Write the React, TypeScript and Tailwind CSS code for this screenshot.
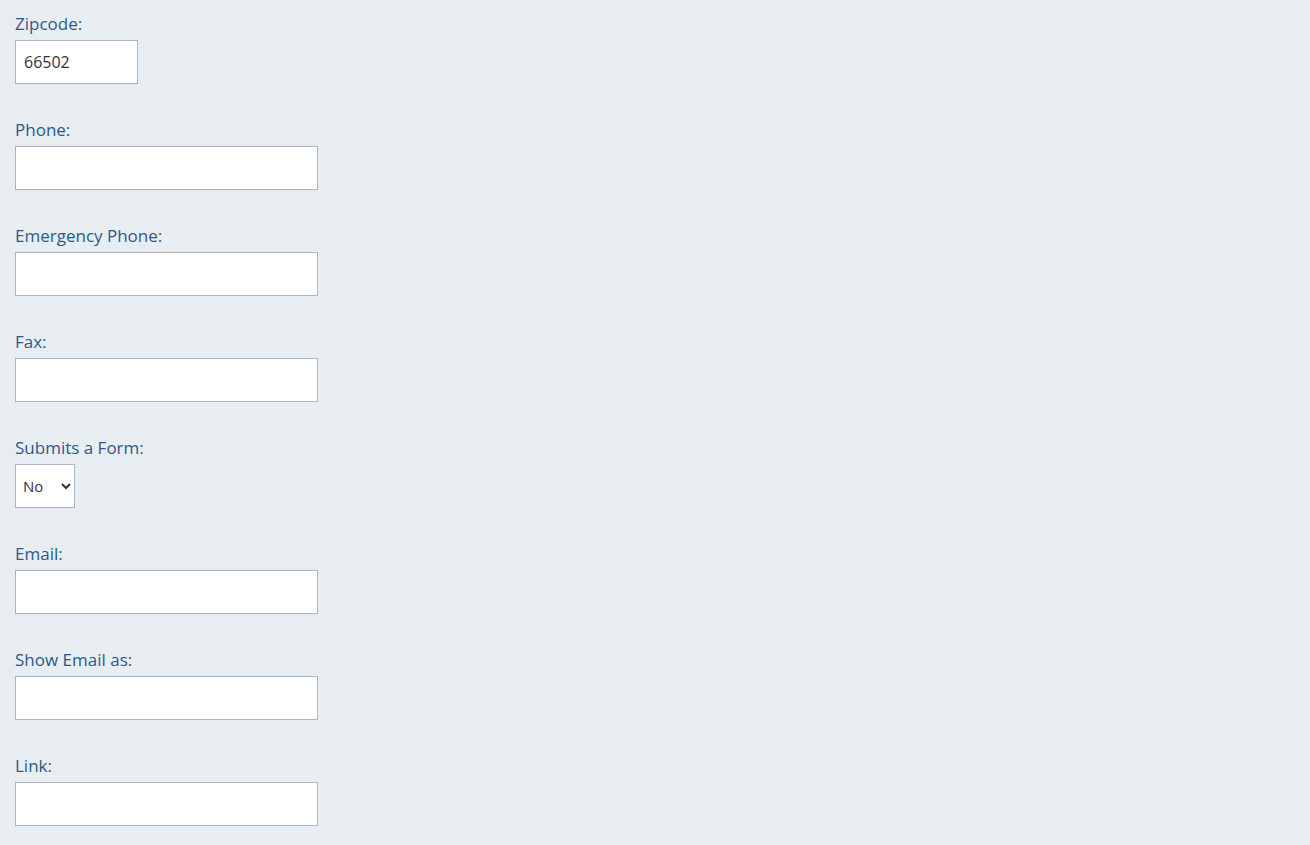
import { useState } from 'react'

type Field = {
  label: string
  kind: 'text' | 'select'
  width?: string
  value?: string
}

const fields: Field[] = [
  { label: 'Zipcode:', kind: 'text', width: 'w-[123px]', value: '66502' },
  { label: 'Phone:', kind: 'text' },
  { label: 'Emergency Phone:', kind: 'text' },
  { label: 'Fax:', kind: 'text' },
  { label: 'Submits a Form:', kind: 'select', value: 'No' },
  { label: 'Email:', kind: 'text' },
  { label: 'Show Email as:', kind: 'text' },
  { label: 'Link:', kind: 'text' },
]

function FormRow({ field }: { field: Field }) {
  const [value, setValue] = useState(field.value || '')

  return (
    <div className="mb-[34px] flex flex-col items-start">
      <label className="mb-1 text-[17px] leading-6 text-[#2b5a87]">{field.label}</label>
      {field.kind === 'select' ? (
        <select
          value={value}
          onChange={(e) => setValue(e.target.value)}
          className="h-[44px] w-[60px] border border-[#aab6c6] bg-white pl-[3px] text-[15px] text-[#333]"
        >
          <option value="No">No</option>
          <option value="Yes">Yes</option>
        </select>
      ) : (
        <input
          type="text"
          value={value}
          onChange={(e) => setValue(e.target.value)}
          className={`h-[44px] ${field.width || 'w-[303px]'} border border-[#aab6c6] bg-white px-2 text-[16px] text-[#333] outline-none`}
        />
      )}
    </div>
  )
}

export default function App() {
  return (
    <div
      className="min-h-[845px] bg-[#e8edf2] px-[15px] pt-3"
      style={{ fontFamily: '"Open Sans", Lato, sans-serif' }}
    >
      {fields.map((f) => (
        <FormRow key={f.label} field={f} />
      ))}
    </div>
  )
}
